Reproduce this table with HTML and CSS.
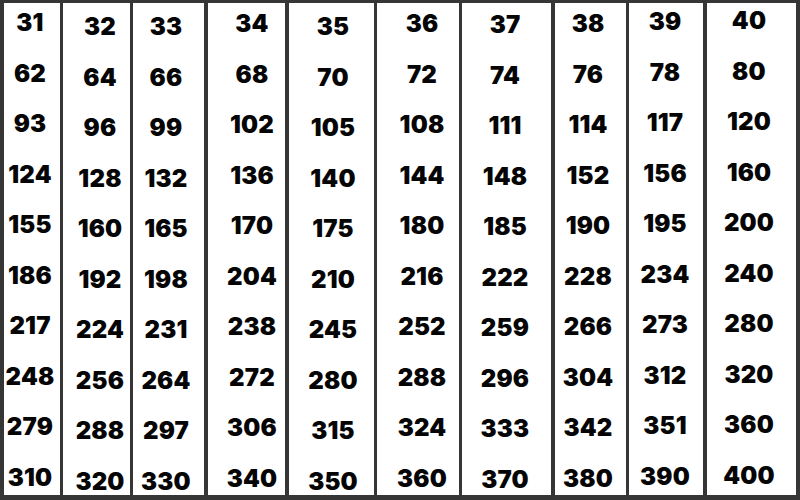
FILE: index.html
```html
<!DOCTYPE html>
<html>
<head>
<meta charset="utf-8">
<link rel="stylesheet" href="styles.css">
</head>
<body>
<div class="table">
  <div class="col c1"><div class="cell">31</div><div class="cell">62</div><div class="cell">93</div><div class="cell">124</div><div class="cell">155</div><div class="cell">186</div><div class="cell">217</div><div class="cell">248</div><div class="cell">279</div><div class="cell">310</div></div>
  <div class="col c2"><div class="cell">32</div><div class="cell">64</div><div class="cell">96</div><div class="cell">128</div><div class="cell">160</div><div class="cell">192</div><div class="cell">224</div><div class="cell">256</div><div class="cell">288</div><div class="cell">320</div></div>
  <div class="col c3"><div class="cell">33</div><div class="cell">66</div><div class="cell">99</div><div class="cell">132</div><div class="cell">165</div><div class="cell">198</div><div class="cell">231</div><div class="cell">264</div><div class="cell">297</div><div class="cell">330</div></div>
  <div class="col c4"><div class="cell">34</div><div class="cell">68</div><div class="cell">102</div><div class="cell">136</div><div class="cell">170</div><div class="cell">204</div><div class="cell">238</div><div class="cell">272</div><div class="cell">306</div><div class="cell">340</div></div>
  <div class="col c5"><div class="cell">35</div><div class="cell">70</div><div class="cell">105</div><div class="cell">140</div><div class="cell">175</div><div class="cell">210</div><div class="cell">245</div><div class="cell">280</div><div class="cell">315</div><div class="cell">350</div></div>
  <div class="col c6"><div class="cell">36</div><div class="cell">72</div><div class="cell">108</div><div class="cell">144</div><div class="cell">180</div><div class="cell">216</div><div class="cell">252</div><div class="cell">288</div><div class="cell">324</div><div class="cell">360</div></div>
  <div class="col c7"><div class="cell">37</div><div class="cell">74</div><div class="cell">111</div><div class="cell">148</div><div class="cell">185</div><div class="cell">222</div><div class="cell">259</div><div class="cell">296</div><div class="cell">333</div><div class="cell">370</div></div>
  <div class="col c8"><div class="cell">38</div><div class="cell">76</div><div class="cell">114</div><div class="cell">152</div><div class="cell">190</div><div class="cell">228</div><div class="cell">266</div><div class="cell">304</div><div class="cell">342</div><div class="cell">380</div></div>
  <div class="col c9"><div class="cell">39</div><div class="cell">78</div><div class="cell">117</div><div class="cell">156</div><div class="cell">195</div><div class="cell">234</div><div class="cell">273</div><div class="cell">312</div><div class="cell">351</div><div class="cell">390</div></div>
  <div class="col c10"><div class="cell">40</div><div class="cell">80</div><div class="cell">120</div><div class="cell">160</div><div class="cell">200</div><div class="cell">240</div><div class="cell">280</div><div class="cell">320</div><div class="cell">360</div><div class="cell">400</div></div>
</div>
</body>
</html>
```
FILE: styles.css
```css
html, body {
  margin: 0;
  padding: 0;
}
body {
  width: 800px;
  height: 500px;
  overflow: hidden;
}
.table {
  box-sizing: border-box;
  width: 800px;
  height: 500px;
  display: flex;
  background: #363636;
  padding: 3px 4px 5px 4px;
}
.col {
  box-sizing: border-box;
  background: #ffffff;
  height: 100%;
  display: flex;
  flex-direction: column;
  overflow: hidden;
  text-align: center;
  font-family: "Inter", "DejaVu Sans", sans-serif;
  font-weight: 900;
  font-size: 24px;
  letter-spacing: 0.2px;
  color: #050505;
}
.cell {
  flex: 0 0 50.5px;
  height: 50.5px;
  line-height: 30px;
}
.c1 { width: 56px; padding: 5px 4px 0 0; }
.c2 { width: 67px; margin-left: 3px; padding: 9px 0 0 7px; }
.c3 { width: 71px; margin-left: 3px; padding: 9px 5px 0 0; }
.c4 { width: 77px; margin-left: 4px; padding: 6px 0 0 11px; }
.c5 { width: 85px; margin-left: 4px; padding: 9px 0 0 3px; }
.c6 { width: 82px; margin-left: 3px; padding: 6px 0 0 8px; }
.c7 { width: 89px; margin-left: 3px; padding: 7px 3px 0 0; }
.c8 { width: 71px; margin-left: 4px; padding: 6px 5px 0 0; }
.c9 { width: 74px; margin-left: 3px; padding: 4px 2px 0 0; }
.c10 { width: 89px; margin-left: 4px; padding: 3px 5px 0 0; }
```
